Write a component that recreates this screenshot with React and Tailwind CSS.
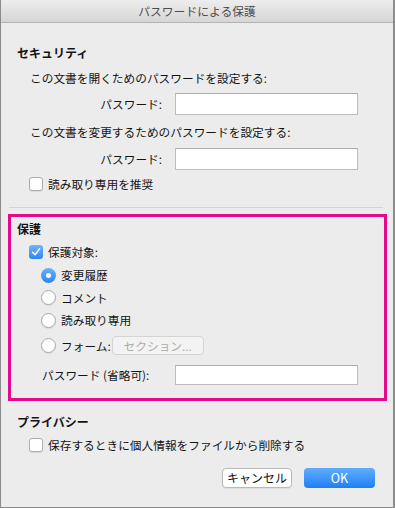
import React from 'react';

function Checkbox({ checked }) {
  if (checked) {
    return (
      <span className="w-[14px] h-[14px] shrink-0 rounded-[3px] bg-linear-to-b from-[#6db4fb] to-[#2d86f5] flex items-center justify-center">
        <svg width="10" height="10" viewBox="0 0 10 10">
          <path d="M1.6 5.3 L4 7.7 L8.5 1.9" stroke="white" strokeWidth="1.6" fill="none" strokeLinecap="round" strokeLinejoin="round" />
        </svg>
      </span>
    );
  }
  return <span className="w-[14px] h-[14px] shrink-0 rounded-[3px] bg-white border border-[#adadad] shadow-[0_1px_1px_rgba(0,0,0,0.08)]" />;
}

function Radio({ checked }) {
  if (checked) {
    return (
      <span className="w-[15px] h-[15px] shrink-0 rounded-full bg-linear-to-b from-[#69b1fb] to-[#2b84f5] flex items-center justify-center">
        <span className="w-[5px] h-[5px] rounded-full bg-white" />
      </span>
    );
  }
  return <span className="w-[15px] h-[15px] shrink-0 rounded-full bg-white border border-[#a8a8a8] shadow-[0_1px_1px_rgba(0,0,0,0.08)]" />;
}

function TextBox({ h = 'h-[22px]', ml = 'ml-[13px]' }) {
  return <div className={`${ml} w-[183px] ${h} bg-white border border-[#bdbdbd] border-t-[#aeaeae]`} />;
}

export default function App() {
  return (
    <div className="w-[395px] h-[508px] bg-[#ececec] border-l border-r-2 border-b border-[#8c8c8c] font-['Noto_Sans_CJK_JP','Liberation_Sans',sans-serif] text-[11.7px] text-[#141414] flex flex-col">
      {/* title bar */}
      <div className="h-[23px] shrink-0 border-b border-[#b3b3b3] bg-linear-to-b from-[#ededed] to-[#d6d6d6] flex items-center justify-center text-[#4d4d4d] text-[11.8px]">
        パスワードによる保護
      </div>

      {/* セキュリティ */}
      <div className="mt-[20px] h-[20px] flex items-center pl-[16px] font-bold text-[12px]">セキュリティ</div>
      <div className="h-[30px] flex items-center pl-[29px]">この文書を開くためのパスワードを設定する:</div>
      <div className="h-[22px] flex items-center">
        <span className="w-[161px] text-right">パスワード:</span>
        <TextBox />
      </div>
      <div className="h-[33px] flex items-center pl-[29px]">この文書を変更するためのパスワードを設定する:</div>
      <div className="h-[22px] flex items-center">
        <span className="w-[161px] text-right">パスワード:</span>
        <TextBox />
      </div>
      <div className="h-[28px] flex items-center gap-[5px] pl-[28px]">
        <Checkbox />
        <span>読み取り専用を推奨</span>
      </div>
      <div className="mt-[9px] ml-[8px] w-[374px] h-px bg-[#d2d2d2]" />

      {/* 保護 */}
      <div className="mt-[6px] ml-[7px] w-[379px] border-[3px] border-[#e6098b] pb-[13px]">
        <div className="h-[24px] flex items-center pl-[6px] font-bold text-[12px]">保護</div>
        <div className="h-[22px] flex items-center gap-[5px] pl-[18px]">
          <Checkbox checked />
          <span>保護対象:</span>
        </div>
        <div className="h-[24px] flex items-center gap-[5px] pl-[30px]">
          <Radio checked />
          <span>変更履歴</span>
        </div>
        <div className="h-[21px] flex items-center gap-[5px] pl-[30px]">
          <Radio />
          <span>コメント</span>
        </div>
        <div className="h-[24px] flex items-center gap-[5px] pl-[30px]">
          <Radio />
          <span>読み取り専用</span>
        </div>
        <div className="h-[27px] flex items-center gap-[5px] pl-[30px]">
          <Radio />
          <span>フォーム:</span>
          <span className="ml-[-4px] w-[92px] h-[19px] rounded-[4px] border border-[#d4d4d4] bg-[#f3f3f3] text-[#ababab] flex items-center justify-center">
            セクション...
          </span>
        </div>
        <div className="mt-[6px] h-[20px] flex items-center">
          <span className="w-[164px] pl-[31px] whitespace-nowrap">パスワード (省略可):</span>
          <TextBox h="h-[20px]" ml="ml-0" />
        </div>
      </div>

      {/* プライバシー */}
      <div className="mt-[11px] h-[20px] flex items-center pl-[16px] font-bold text-[12px]">プライバシー</div>
      <div className="h-[26px] flex items-center gap-[5px] pl-[28px]">
        <Checkbox />
        <span>保存するときに個人情報をファイルから削除する</span>
      </div>

      {/* buttons */}
      <div className="mt-[10px] h-[20px] flex justify-end gap-[12px] pr-[18px]">
        <button className="w-[70px] h-[20px] rounded-[4px] bg-white border border-[#b9b9b9] shadow-[0_1px_1px_rgba(0,0,0,0.06)] text-[12px] text-[#111] flex items-center justify-center">
          キャンセル
        </button>
        <button className="w-[71px] h-[20px] rounded-[4px] bg-linear-to-b from-[#5fadfc] to-[#1b7ff6] text-white text-[12.5px] flex items-center justify-center">
          OK
        </button>
      </div>
    </div>
  );
}
